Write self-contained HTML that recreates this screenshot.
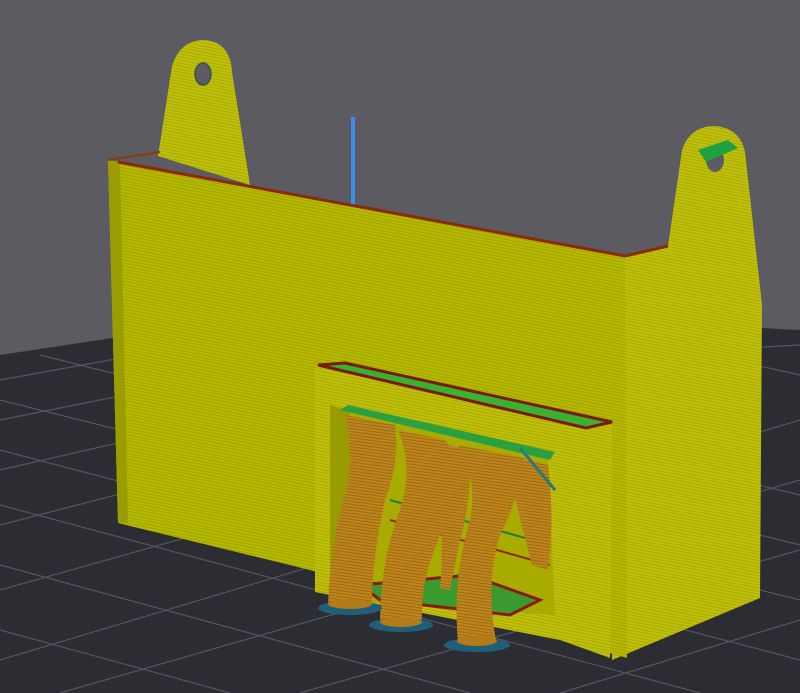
<!DOCTYPE html>
<html><head><meta charset="utf-8"><style>html,body{margin:0;padding:0;background:#5b5b61}svg{display:block}</style></head>
<body>
<svg width="800" height="693" viewBox="0 0 800 693" xmlns="http://www.w3.org/2000/svg">
<defs>
<pattern id="st" width="4" height="3" patternUnits="userSpaceOnUse" patternTransform="rotate(11)">
<rect width="4" height="3" fill="#b6b800"/><rect width="4" height="1" fill="#a2a400"/>
</pattern>
<pattern id="st2" width="4" height="3" patternUnits="userSpaceOnUse" patternTransform="rotate(11)">
<rect width="4" height="3" fill="#c0c00a"/><rect width="4" height="1" fill="#a9aa05"/>
</pattern>
<pattern id="tr" width="4" height="3" patternUnits="userSpaceOnUse" patternTransform="rotate(8)">
<rect width="4" height="3" fill="#c0861e"/><rect width="4" height="1" fill="#9c6a12"/>
</pattern>
</defs>
<rect width="800" height="693" fill="#5b5b61"/>
<polygon points="0,355 330,305 800,330 800,693 0,693" fill="#2c2d33"/>
<g stroke="#55565d" stroke-width="1.2" fill="none">
<line x1="0" y1="380" x2="330" y2="320"/><line x1="0" y1="420" x2="400" y2="340"/>
<line x1="0" y1="470" x2="480" y2="360"/><line x1="0" y1="525" x2="560" y2="380"/>
<line x1="0" y1="590" x2="640" y2="410"/><line x1="0" y1="660" x2="800" y2="420"/>
<line x1="60" y1="693" x2="800" y2="480"/><line x1="300" y1="693" x2="800" y2="550"/>
<line x1="560" y1="693" x2="800" y2="620"/>
<line x1="0" y1="400" x2="800" y2="600"/><line x1="0" y1="450" x2="800" y2="660"/>
<line x1="0" y1="505" x2="700" y2="693"/><line x1="0" y1="565" x2="470" y2="693"/>
<line x1="0" y1="630" x2="230" y2="693"/><line x1="40" y1="355" x2="800" y2="545"/>
<line x1="150" y1="340" x2="800" y2="495"/><line x1="600" y1="330" x2="800" y2="375"/>
<line x1="620" y1="355" x2="800" y2="345"/>
</g>
<rect x="351" y="117" width="4" height="88" fill="#3a8ee8"/>
<path d="M158,156 L172,66 Q180,40 205,40 Q230,42 232,72 L250,185 Z" fill="url(#st2)"/>
<ellipse cx="203" cy="74" rx="8" ry="11" fill="#5b5b61" stroke="#2f5a4a" stroke-width="1.5"/>
<path d="M625,256 L668,246 L682,150 Q690,126 715,126 Q740,128 745,152 L762,305 L760,598 L612,660 Z" fill="url(#st2)"/>
<ellipse cx="715" cy="160" rx="9" ry="12" fill="#5b5b61"/>
<polygon points="698,150 728,140 738,148 706,162" fill="#20a040"/>
<path d="M108,160 L625,256 L627,658 L310,570 L118,523 Z" fill="url(#st)"/>
<path d="M108,160 L120,162 L128,523 L118,523 Z" fill="#9a9c00"/>
<polyline points="108,160 160,152" stroke="#8a3a10" stroke-width="2" fill="none"/>
<polyline points="118,162 625,256 668,246" stroke="#8a2a0a" stroke-width="3" fill="none"/>
<path d="M315,365 L612,425 L610,658 L560,640 L315,592 Z" fill="url(#st2)"/>
<polygon points="318,365 345,363 612,422 586,428" fill="#3cb030" stroke="#7a1a0a" stroke-width="3"/>
<path d="M330,405 L548,455 L555,615 L330,600 Z" fill="#a8ac00"/>
<path d="M330,405 L350,412 L352,598 L330,600 Z" fill="#989c00"/>
<polygon points="360,585 470,575 540,600 510,615 380,600" fill="#3a9a30" stroke="#8a1a0a" stroke-width="3"/>
<line x1="390" y1="500" x2="550" y2="545" stroke="#2a7a3a" stroke-width="2"/>
<line x1="390" y1="520" x2="550" y2="565" stroke="#8a2a0a" stroke-width="2"/>
<g fill="url(#tr)">
<path d="M345,415 L395,425 Q400,460 385,500 Q372,560 372,602 L328,605 Q330,545 345,495 Q355,455 345,415 Z"/>
<path d="M398,430 L445,440 Q470,470 445,525 Q420,575 422,622 L380,624 Q380,565 398,515 Q415,470 398,430 Z"/>
<path d="M425,440 L470,450 Q472,500 460,540 L450,590 L440,588 Q445,530 435,480 Z"/>
<path d="M458,445 L525,458 Q520,495 500,535 Q485,585 496,640 L458,642 Q452,580 470,520 Q478,480 458,445 Z"/>
<path d="M505,455 L548,465 Q555,520 548,570 L532,565 Q520,520 505,455 Z"/>
</g>
<polygon points="340,410 348,405 555,452 550,460" fill="#2aa040"/>
<line x1="520" y1="448" x2="555" y2="490" stroke="#2a7a7a" stroke-width="3"/>
<g fill="#1f5f7a">
<ellipse cx="350" cy="608" rx="32" ry="7"/><ellipse cx="401" cy="625" rx="32" ry="7"/><ellipse cx="477" cy="645" rx="33" ry="7"/>
</g>
<g fill="#b27a18">
<ellipse cx="350" cy="604" rx="22" ry="5"/><ellipse cx="401" cy="622" rx="21" ry="5"/><ellipse cx="477" cy="641" rx="20" ry="5"/>
</g>
</svg>
</body></html>
